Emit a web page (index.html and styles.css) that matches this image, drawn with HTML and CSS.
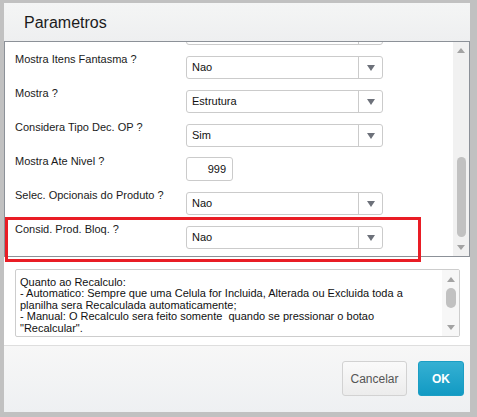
FILE: index.html
```html
<!DOCTYPE html>
<html lang="pt">
<head>
<meta charset="utf-8">
<title>Parametros</title>
<link rel="stylesheet" href="styles.css">
</head>
<body>
<div class="dialog">
  <div class="header"><h1 class="title">Parametros</h1></div>
  <div class="panel">
    <div class="panel-content">
      <div class="rows">
        <div class="row">
          <div class="label"></div>
          <div class="select"><span class="value"></span><span class="arrow"></span></div>
        </div>
        <div class="row">
          <div class="label">Mostra Itens Fantasma ?</div>
          <div class="select"><span class="value">Nao</span><span class="arrow"></span></div>
        </div>
        <div class="row">
          <div class="label">Mostra ?</div>
          <div class="select"><span class="value">Estrutura</span><span class="arrow"></span></div>
        </div>
        <div class="row">
          <div class="label">Considera Tipo Dec. OP ?</div>
          <div class="select"><span class="value">Sim</span><span class="arrow"></span></div>
        </div>
        <div class="row">
          <div class="label">Mostra Ate Nivel ?</div>
          <div class="input">999</div>
        </div>
        <div class="row">
          <div class="label">Selec. Opcionais do Produto ?</div>
          <div class="select"><span class="value">Nao</span><span class="arrow"></span></div>
        </div>
        <div class="row">
          <div class="label">Consid. Prod. Bloq. ?</div>
          <div class="select"><span class="value">Nao</span><span class="arrow"></span></div>
        </div>
      </div>
    </div>
    <div class="scrollbar">
      <span class="sb-up"></span>
      <div class="sb-track"><div class="sb-thumb"></div></div>
      <span class="sb-down"></span>
    </div>
  </div>
  <div class="memo">
    <div class="memo-text">Quanto ao Recalculo:<br>- Automatico: Sempre que uma Celula for Incluida, Alterada ou Excluida toda a<br>planilha sera Recalculada automaticamente;<br>- Manual: O Recalculo sera feito somente&nbsp; quando se pressionar o botao<br>"Recalcular".</div>
    <div class="memo-scroll">
      <span class="sb-up"></span>
      <div class="memo-track"><div class="memo-thumb"></div></div>
      <span class="sb-down"></span>
    </div>
  </div>
  <div class="footer">
    <button class="btn btn-cancel">Cancelar</button>
    <button class="btn btn-ok">OK</button>
  </div>
  <div class="highlight"></div>
</div>
</body>
</html>
```
FILE: styles.css
```css
* { box-sizing: border-box; }
html, body { margin: 0; padding: 0; }
body {
  background: #c1c1c1;
  width: 477px;
  height: 417px;
  padding: 3px 7px 5px 4px;
  font-family: "Liberation Sans", Arial, sans-serif;
  overflow: hidden;
}
.dialog {
  position: relative;
  width: 466px;
  height: 409px;
  background: #fff;
  display: flex;
  flex-direction: column;
}
.header {
  height: 38px;
  background: linear-gradient(#f4f5f5, #eeeff0);
  padding: 11px 0 0 20px;
}
.title {
  margin: 0;
  font-weight: normal;
  font-size: 16px;
  line-height: 18px;
  color: #1b1b1b;
}
.panel {
  height: 216px;
  border: 1px solid #8c9198;
  display: flex;
}
.panel-content {
  flex: 1;
  overflow: hidden;
}
.rows { margin-top: -24px; }
.row {
  display: flex;
  align-items: flex-start;
  height: 34px;
  padding-left: 10px;
}
.label {
  width: 171px;
  font-size: 11px;
  line-height: 14px;
  color: #1a1a1a;
}
.select {
  margin-top: 4px;
  width: 197px;
  height: 23px;
  border: 1px solid #cbcbcb;
  border-radius: 3px;
  display: flex;
  background: #fff;
}
.value {
  flex: 1;
  padding-left: 5px;
  font-size: 11px;
  line-height: 21px;
  color: #111;
}
.arrow {
  width: 24px;
  border-left: 1px solid #cbcbcb;
  display: flex;
  align-items: center;
  justify-content: center;
}
.arrow::after {
  content: "";
  border-left: 4.5px solid transparent;
  border-right: 4.5px solid transparent;
  border-top: 6px solid #6d717a;
}
.input {
  margin-top: 3px;
  width: 47px;
  height: 24px;
  border: 1px solid #cbcbcb;
  border-radius: 3px;
  text-align: right;
  padding-right: 6px;
  font-size: 11px;
  line-height: 22px;
  color: #111;
}
.scrollbar {
  width: 16px;
  background: #f1f1f1;
  display: flex;
  flex-direction: column;
  align-items: center;
}
.sb-up, .sb-down {
  height: 17px;
  display: flex;
  align-items: center;
  justify-content: center;
}
.sb-up::after {
  content: "";
  border-left: 4px solid transparent;
  border-right: 4px solid transparent;
  border-bottom: 5px solid #a3a3a3;
}
.sb-down::after {
  content: "";
  border-left: 4px solid transparent;
  border-right: 4px solid transparent;
  border-top: 5px solid #a3a3a3;
}
.sb-track {
  flex: 1;
  width: 100%;
  display: flex;
  flex-direction: column;
  justify-content: flex-end;
  align-items: center;
  padding-bottom: 2px;
}
.sb-thumb {
  width: 9px;
  height: 80px;
  border-radius: 5px;
  background: #c1c1c1;
}
.memo {
  margin: 12px 10px 0 11px;
  height: 68px;
  border: 1px solid #cdcdcd;
  border-radius: 2px;
  display: flex;
  overflow: hidden;
}
.memo-text {
  flex: 1;
  padding: 7px 0 0 4px;
  font-size: 11px;
  line-height: 11.4px;
  color: #111;
  white-space: nowrap;
}
.memo-scroll {
  width: 17px;
  background: #f7f7f7;
  display: flex;
  flex-direction: column;
  align-items: center;
}
.memo-scroll .sb-up { height: 17px; padding-top: 2px; }
.memo-track {
  flex: 1;
  display: flex;
  justify-content: center;
}
.memo-thumb {
  width: 10px;
  height: 20px;
  border-radius: 5px;
  background: #c1c1c1;
  margin-top: 1px;
}
.footer {
  margin-top: 8px;
  flex: 1;
  border-top: 1px solid #dedede;
  background: linear-gradient(#f7f7f7, #eef0f2);
  display: flex;
  justify-content: flex-end;
  align-items: flex-start;
  gap: 11px;
  padding: 15px 6px 0 0;
}
.btn {
  height: 35px;
  border-radius: 3px;
  font-family: "Liberation Sans", Arial, sans-serif;
  font-size: 12px;
  cursor: pointer;
}
.btn-cancel {
  width: 65px;
  border: 1px solid #d2d2d2;
  background: linear-gradient(#fafafa, #ececec);
  color: #555;
}
.btn-ok {
  width: 46px;
  border: 1px solid #1b9ec4;
  background: linear-gradient(#35b0d3, #129ac3);
  color: #fff;
  font-weight: bold;
}
.highlight {
  position: absolute;
  left: 1px;
  top: 214px;
  width: 416px;
  height: 45px;
  border: 3px solid #e91d25;
  pointer-events: none;
}
```
